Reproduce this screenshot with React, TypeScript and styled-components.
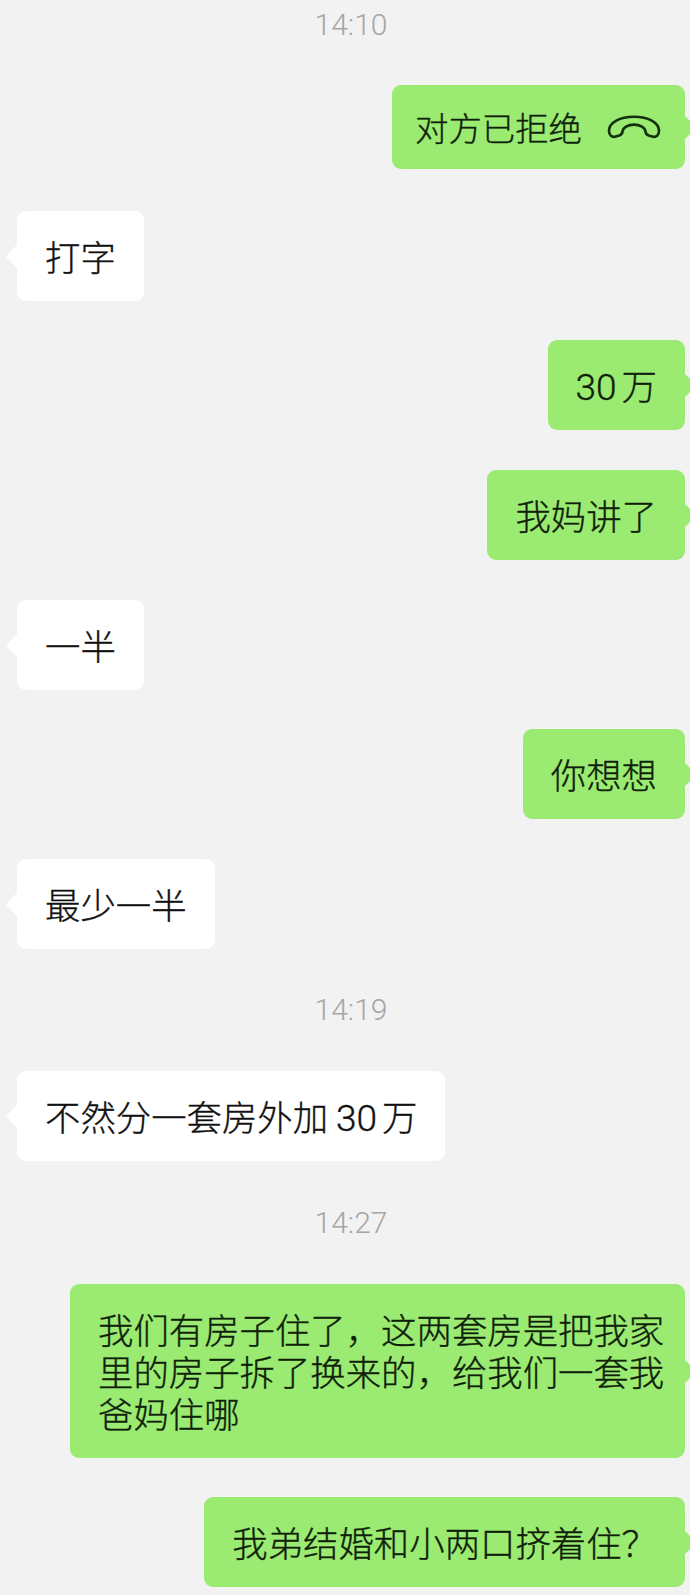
import React from "react";
import styled, { createGlobalStyle } from "styled-components";

const green_bubble_color: string = "#9bea72";
const white_bubble_color: string = "#ffffff";

const GlobalStyle = createGlobalStyle`
  html, body {
    margin: 0;
    padding: 0;
    background-color: #f2f2f2;
  }
`;

function HangupIcon() {
  return (
    <PhoneIcon viewBox="0 0 54 24" fill="none">
      <path
        d="M2 16C2 7.500 13 1.800 27 1.800S52 7.500 52 16c0 4.500-3 6.500-6 5.700l-4.300-1.200c-2.300-.7-3.100-2-3.300-4.300-.3-3.400-5.200-6.600-11.400-6.600s-11.100 3.200-11.400 6.600c-.2 2.300-1 3.600-3.300 4.300L8 21.700C5 22.500 2 20.500 2 16z"
        stroke="#12300c"
        strokeWidth="2.600"
        strokeLinejoin="round"
      />
    </PhoneIcon>
  );
}

function App() {
  return (
    <ChatPage>
      <GlobalStyle />
      <TimeLabel>14:10</TimeLabel>
      <Bubble $mine $compact>
        对方已拒绝
        <HangupIcon />
      </Bubble>
      <Bubble $nudge={2}>打字</Bubble>
      <Bubble $mine $nudge={-1}>
        <Digits>30</Digits>万
      </Bubble>
      <Bubble $mine>我妈讲了</Bubble>
      <Bubble>一半</Bubble>
      <Bubble $mine $nudge={-1}>
        你想想
      </Bubble>
      <Bubble>最少一半</Bubble>
      <TimeLabel $nudge={1}>14:19</TimeLabel>
      <Bubble $nudge={1}>
        不然分一套房外加 <Digits>30</Digits>万
      </Bubble>
      <TimeLabel $nudge={2}>14:27</TimeLabel>
      <Bubble $mine $wide $nudge={1}>
        我们有房子住了，这两套房是把我家里的房子拆了换来的，给我们一套我爸妈住哪
      </Bubble>
      <Bubble $mine $nudge={-1}>
        我弟结婚和小两口挤着住？
      </Bubble>
    </ChatPage>
  );
}

const ChatPage = styled.div`
  display: flex;
  flex-direction: column;
  gap: 40px;
  box-sizing: border-box;
  width: 690px;
  height: 1595px;
  padding: 5px 5px 0 17px;
  overflow: hidden;
  font-family: "Noto Sans CJK SC", "Noto Sans", sans-serif;
`;

const TimeLabel = styled.div<{ $nudge?: number }>`
  align-self: center;
  margin-top: ${(props) => props.$nudge || 0}px;
  font-family: Roboto, "Liberation Sans", sans-serif;
  font-weight: 300;
  font-size: 30px;
  line-height: 40px;
  color: #a6a6a6;
`;

const Bubble = styled.div<{
  $mine?: boolean;
  $compact?: boolean;
  $wide?: boolean;
  $nudge?: number;
}>`
  position: relative;
  display: ${(props) => (props.$compact ? "flex" : "block")};
  align-items: center;
  align-self: ${(props) => (props.$mine ? "flex-end" : "flex-start")};
  box-sizing: border-box;
  margin-top: ${(props) => props.$nudge || 0}px;
  padding: ${(props) => (props.$compact ? "21px 24px 21px 23px" : "24px 28px")};
  padding-right: ${(props) => (props.$wide ? "20px" : "")};
  width: ${(props) => (props.$wide ? "615px" : "auto")};
  height: ${(props) => (props.$compact ? "84px" : "90px")};
  height: ${(props) => (props.$wide ? "174px" : "")};
  border-radius: 9px;
  background-color: ${(props) =>
    props.$mine ? green_bubble_color : white_bubble_color};
  color: ${(props) => (props.$mine ? "#0f1f0a" : "#111111")};
  font-size: ${(props) => (props.$compact ? "33.4px" : "35.4px")};
  font-weight: 300;
  -webkit-text-stroke: 0.35px currentColor;
  line-height: 42px;

  &::after {
    content: "";
    position: absolute;
    top: 50%;
    ${(props) => (props.$mine ? "right: -8px;" : "left: -8px;")}
    width: 17px;
    height: 17px;
    margin-top: -8px;
    border-radius: 3px;
    background-color: inherit;
    transform: rotate(45deg);
  }
`;

const Digits = styled.span`
  margin-right: 5px;
  font-family: Roboto, "Liberation Sans", sans-serif;
  font-size: 37px;
  line-height: 1;
`;

const PhoneIcon = styled.svg`
  flex: none;
  width: 54px;
  height: 24px;
  margin-left: 25px;
`;

export default App;
